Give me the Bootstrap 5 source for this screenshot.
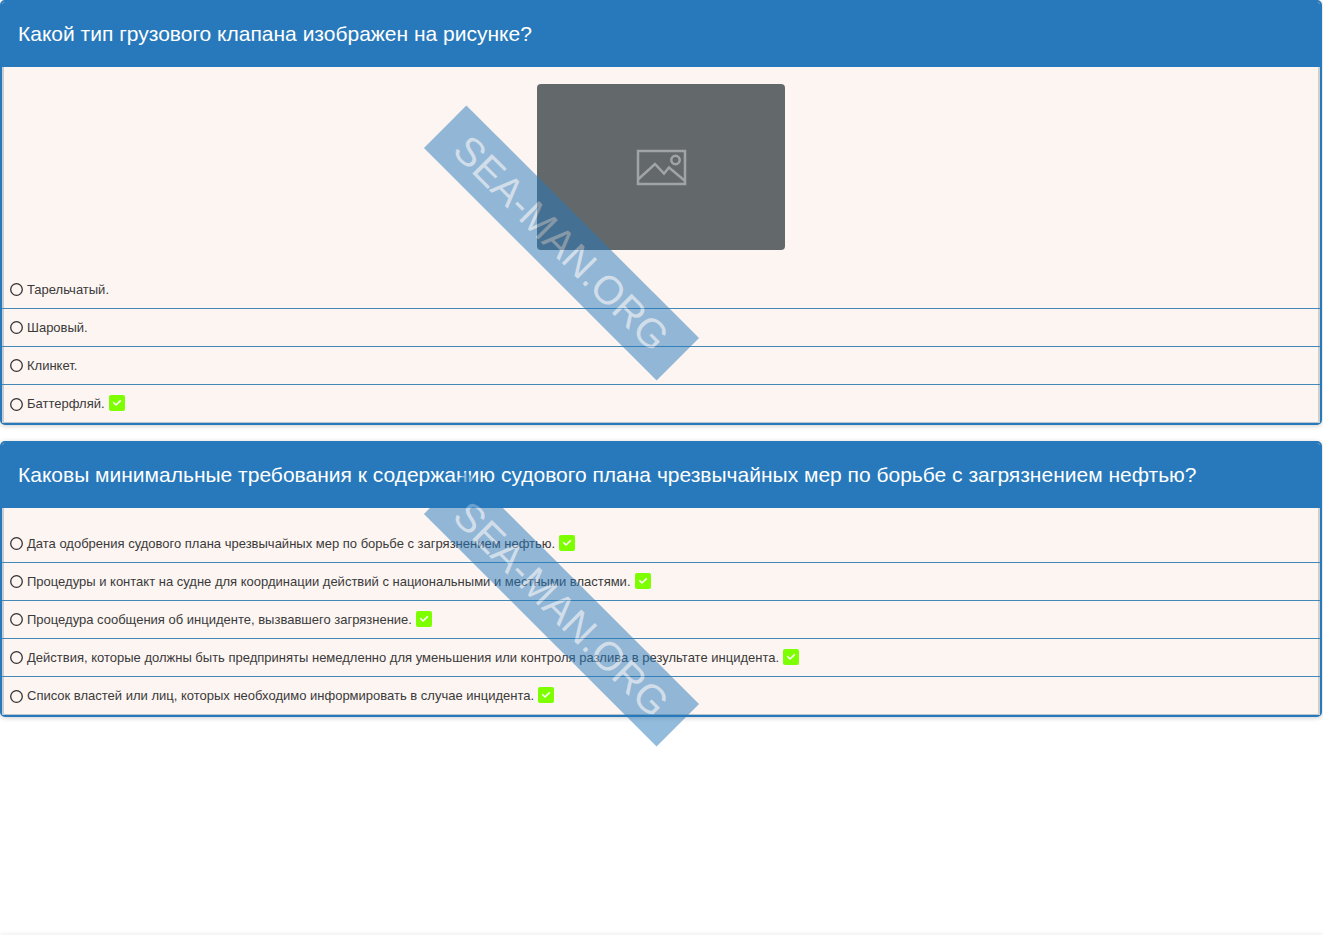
<!DOCTYPE html>
<html lang="ru">
<head>
<meta charset="utf-8">
<meta name="viewport" content="width=device-width, initial-scale=1">
<title>Тест: грузовые операции</title>
<link rel="stylesheet" href="https://cdn.jsdelivr.net/npm/bootstrap@5.3.0/dist/css/bootstrap.min.css">
<style>
  :root { --sea: #2779bb; }
  body { font-family: "Liberation Sans", Arial, sans-serif; color: #3a3a3a; }
  .page { min-height: 100vh; overflow: hidden; }
  .quiz { --bs-card-border-radius: 5px; --bs-card-inner-border-radius: 3px; --bs-card-bg: #fdf5f2; border: 2px solid var(--sea); margin-right: 1px; box-shadow: 0 1px 5px rgba(0,0,0,.2); }
  .quiz-head { background: var(--sea); color: #fff; padding: 14px 16px 16px; border: 0; }
  .quiz-head h2 { font-size: 21px; line-height: 35px; }
  .quiz-body { padding-top: 17px; box-shadow: inset 2px 0 #c9cdd2, inset -2px 0 #cfcfcd, inset 0 -1px #bcc4cb; }
  .picture { width: 248px; height: 166px; margin-bottom: 21px; }
  .answer { height: 38px; padding: 0 8px; font-size: 13px; border-bottom: 1px solid #4388b6; }
  .answer:last-child { border-bottom: 0; }
  .answer label { margin: 0 4px; }
  .answer input { appearance: none; width: 13px; height: 13px; margin: 0; background: url("data:image/svg+xml,%3Csvg xmlns='http://www.w3.org/2000/svg' viewBox='0 0 13 13'%3E%3Ccircle cx='6.5' cy='6.5' r='5.8' fill='none' stroke='%23333' stroke-width='1.3'/%3E%3C/svg%3E"); }
  .answer input:checked { background-color: #777; border-radius: 50%; }
  .answer svg { margin-bottom: 2px; }
  .watermark { left: 30%; top: 50%; width: 329px; height: 60px; font-size: 40px; line-height: 60px; background: var(--sea); color: rgba(255,255,255,.6); opacity: .5; transform: rotate(45deg); pointer-events: none; z-index: 2; }
  .foot { height: 1px; box-shadow: 0 0 4px rgba(0,0,0,.25); }
</style>
</head>
<body>
<svg class="d-none">
  <symbol id="tick" viewBox="0 0 16 16"><rect width="16" height="16" rx="2" fill="#7dff00"/><path d="M4.300 7.300 7 10l4.800-4.600" fill="none" stroke="#fff" stroke-width="1.600"/></symbol>
</svg>
<div class="page d-flex flex-column">
  <main class="d-flex flex-column gap-3">
    <section class="card quiz">
      <div class="card-header quiz-head"><h2 class="mb-0 fw-normal">Какой тип грузового клапана изображен на рисунке?</h2></div>
      <div class="quiz-body">
        <svg class="picture d-block mx-auto" viewBox="0 0 248 166" role="img" aria-label="Изображение клапана">
          <rect width="248" height="166" rx="4" fill="#63686b"/>
          <g fill="none" stroke="#a1a4a6" stroke-width="2.500">
            <rect x="101" y="67" width="47" height="33"/>
            <circle cx="138.500" cy="76" r="4.200"/>
            <path d="M101 95.500 118 80l9 9.500 5-6 15.500 13"/>
          </g>
        </svg>
        <div class="answer d-flex align-items-center"><input type="radio" name="q1" id="a1"><label for="a1">Тарельчатый.</label></div>
        <div class="answer d-flex align-items-center"><input type="radio" name="q1" id="a2"><label for="a2">Шаровый.</label></div>
        <div class="answer d-flex align-items-center"><input type="radio" name="q1" id="a3"><label for="a3">Клинкет.</label></div>
        <div class="answer d-flex align-items-center"><input type="radio" name="q1" id="a4"><label for="a4">Баттерфляй.</label><svg width="16" height="16" aria-hidden="true"><use href="#tick"/></svg></div>
      </div>
      <div class="watermark position-absolute text-center" aria-hidden="true">SEA-MAN.ORG</div>
    </section>
    <section class="card quiz">
      <div class="card-header quiz-head"><h2 class="mb-0 fw-normal">Каковы минимальные требования к содержанию судового плана чрезвычайных мер по борьбе с загрязнением нефтью?</h2></div>
      <div class="quiz-body">
        <div class="answer d-flex align-items-center"><input type="radio" name="q2" id="b1"><label for="b1">Дата одобрения судового плана чрезвычайных мер по борьбе с загрязнением нефтью.</label><svg width="16" height="16" aria-hidden="true"><use href="#tick"/></svg></div>
        <div class="answer d-flex align-items-center"><input type="radio" name="q2" id="b2"><label for="b2">Процедуры и контакт на судне для координации действий с национальными и местными властями.</label><svg width="16" height="16" aria-hidden="true"><use href="#tick"/></svg></div>
        <div class="answer d-flex align-items-center"><input type="radio" name="q2" id="b3"><label for="b3">Процедура сообщения об инциденте, вызвавшего загрязнение.</label><svg width="16" height="16" aria-hidden="true"><use href="#tick"/></svg></div>
        <div class="answer d-flex align-items-center"><input type="radio" name="q2" id="b4"><label for="b4">Действия, которые должны быть предприняты немедленно для уменьшения или контроля разлива в результате инцидента.</label><svg width="16" height="16" aria-hidden="true"><use href="#tick"/></svg></div>
        <div class="answer d-flex align-items-center"><input type="radio" name="q2" id="b5"><label for="b5">Список властей или лиц, которых необходимо информировать в случае инцидента.</label><svg width="16" height="16" aria-hidden="true"><use href="#tick"/></svg></div>
      </div>
      <div class="watermark position-absolute text-center" aria-hidden="true">SEA-MAN.ORG</div>
    </section>
  </main>
  <footer class="foot mt-auto"></footer>
</div>
<script src="https://cdn.jsdelivr.net/npm/bootstrap@5.3.0/dist/js/bootstrap.bundle.min.js"></script>
</body>
</html>
